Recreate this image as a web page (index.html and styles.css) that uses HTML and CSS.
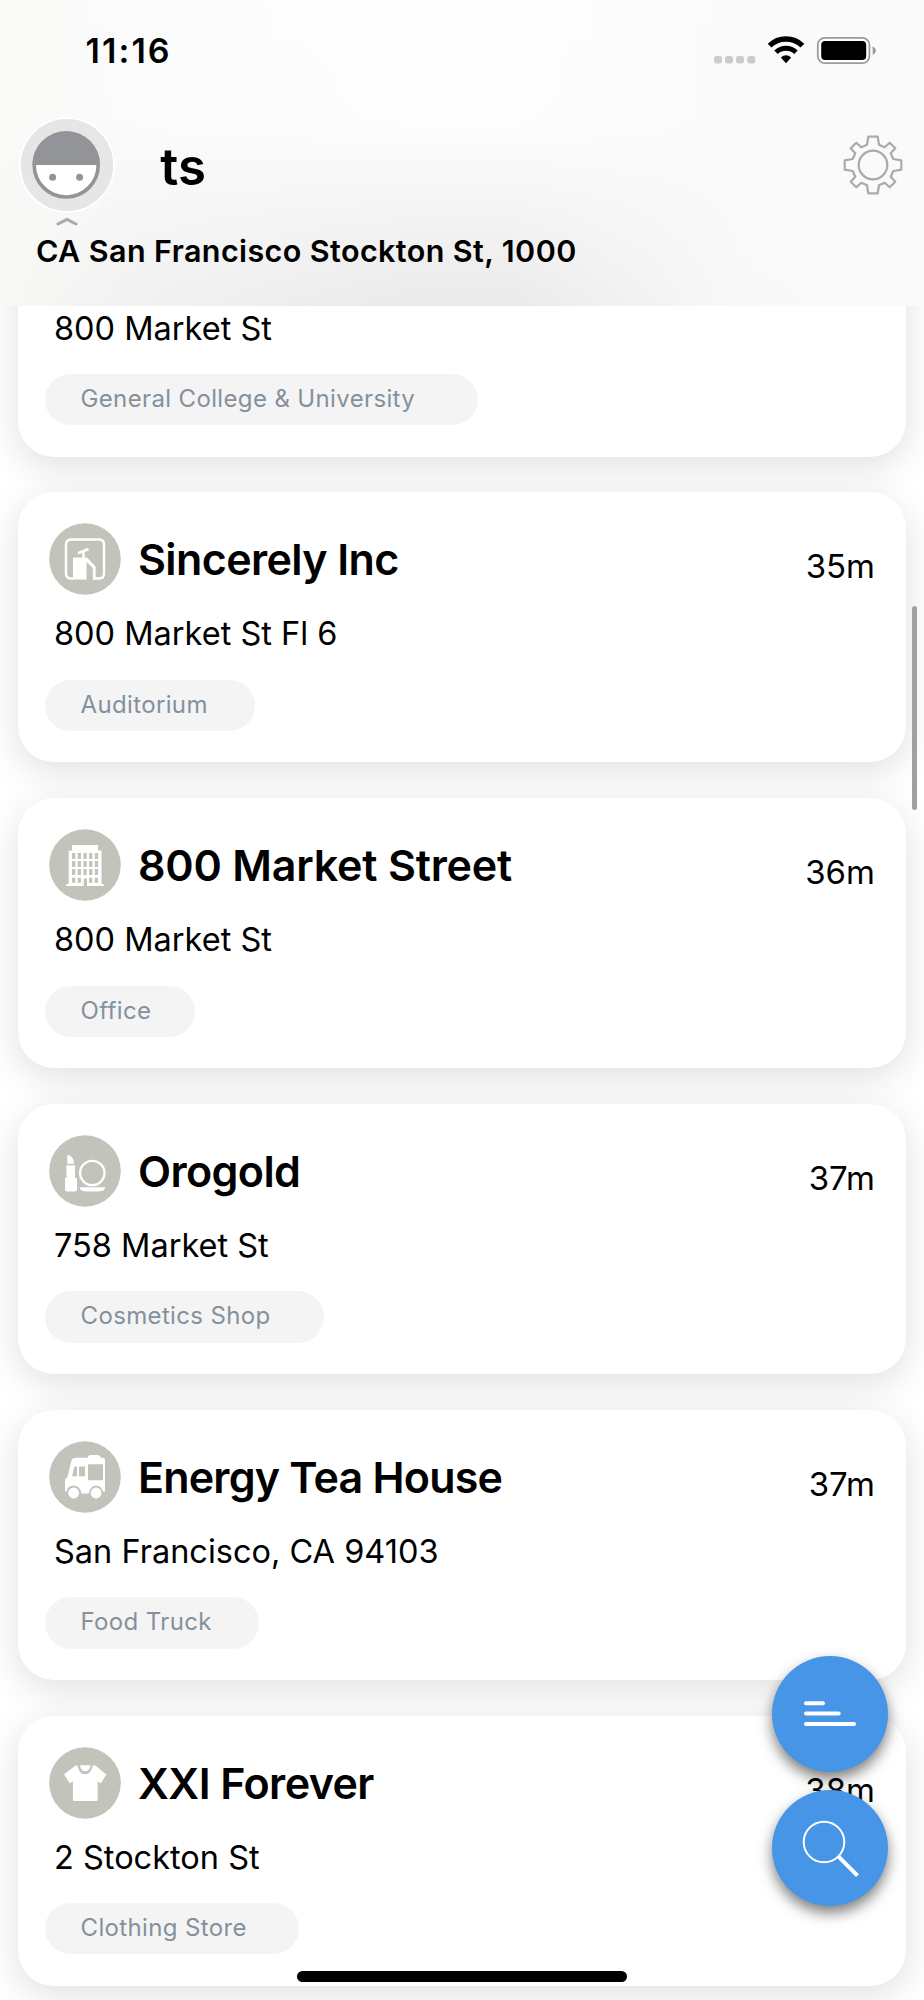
FILE: index.html
```html
<!DOCTYPE html>
<html lang="en">
<head>
<meta charset="utf-8">
<title>Nearby places</title>
<link rel="stylesheet" href="styles.css">
</head>
<body>
<div class="screen">
  <header class="header">
    <div class="status">
      <span class="time">11:16</span>
      <svg class="status-icons" viewBox="0 0 164 30" width="164" height="30">
        <g fill="#cbcbcb"><rect x="0" y="20" width="8" height="7.5" rx="2.5"/><rect x="11" y="20" width="8" height="7.5" rx="2.5"/><rect x="22" y="20" width="8" height="7.5" rx="2.5"/><rect x="33.3" y="20" width="8" height="7.5" rx="2.5"/></g>
        <g fill="none" stroke="#000">
          <path d="M55.6 9.6A23.5 23.5 0 0 1 88.4 9.6" stroke-width="5.4"/>
          <path d="M62 16.3A14.5 14.5 0 0 1 82 16.3" stroke-width="5"/>
        </g>
        <path d="M66.8 21.6Q72 17 77.2 21.6L72 27.2Z" fill="#000"/>
        <rect x="103.8" y="1.8" width="51.6" height="25.4" rx="7.2" fill="#fff" stroke="#9b9b9b" stroke-width="1.8"/>
        <rect x="107.2" y="5" width="45" height="19" rx="4" fill="#000"/>
        <path d="M158.6 10.2Q162 12 162 14.5T158.6 19Z" fill="#9b9b9b"/>
      </svg>
    </div>
    <div class="profile">
      <svg class="avatar" viewBox="0 0 96 96" width="96" height="96">
        <circle cx="48" cy="48" r="47" fill="#e6e6e4" stroke="#fff" stroke-width="1.8"/>
        <circle cx="47.2" cy="48" r="32" fill="#fff" stroke="#939498" stroke-width="3.6"/>
        <path d="M13.4 48A33.8 33.8 0 0 1 81 48Z" fill="#939498"/>
        <circle cx="33.6" cy="60.2" r="3.5" fill="#939498"/><circle cx="60.6" cy="60.2" r="3.5" fill="#939498"/>
      </svg>
      <h1 class="user">ts</h1>
      <svg class="gear" viewBox="-30 -30 60 60" width="60" height="60" fill="none" stroke="#aaa" stroke-width="2.2" stroke-linejoin="round">
        <path d="M-4.7-28.3H4.7L6-20.3 11.7-17.7 16.7-22.3 22.3-16.7 17.7-11.7 20.3-6 28.3-4.7V4.7L20.3 6 17.7 11.7 22.3 16.7 16.7 22.3 11.7 17.7 6 20.3 4.7 28.3H-4.7L-6 20.3-11.7 17.7-16.7 22.3-22.3 16.7-17.7 11.7-20.3 6-28.3 4.7V-4.7L-20.3-6-17.7-11.7-22.3-16.7-16.7-22.3-11.7-17.7-6-20.3Z"/>
        <circle r="14.3"/>
      </svg>
    </div>
    <svg class="chevron" viewBox="0 0 22 9" width="22" height="9"><path d="M2 7 11 2.3 20 7" fill="none" stroke="#aaa" stroke-width="3" stroke-linecap="round" stroke-linejoin="round"/></svg>
    <p class="location">CA San Francisco Stockton St, 1000</p>
  </header>

  <main class="list">
    <article class="card">
      <div class="top"></div>
      <p class="address">800 Market St</p>
      <span class="tag tag-university">General College &amp; University</span>
    </article>
    <article class="card">
      <div class="top">
        <svg class="icon" viewBox="0 0 72 72" width="72" height="72">
          <circle cx="36" cy="36" r="35.8" fill="#c3c3bc"/>
          <path d="M24 55.5H22Q17 55.5 17 50.5V21.5Q17 16.5 22 16.5H50Q55 16.5 55 21.5V50.5Q55 55.5 50 55.5H45V44L37 36.5" fill="none" stroke="#fff" stroke-width="2.4"/>
          <path d="M24 34.5H38L46.5 43.5V55H44V45L37.5 38.5V56.5H24Z" fill="#fff"/>
          <path d="M29 30.3 39.5 26M34.5 28V35" fill="none" stroke="#fff" stroke-width="2.6"/>
        </svg>
        <h2 class="name">Sincerely Inc</h2><span class="distance">35m</span>
      </div>
      <p class="address">800 Market St Fl 6</p>
      <span class="tag tag-auditorium">Auditorium</span>
    </article>
    <article class="card">
      <div class="top">
        <svg class="icon" viewBox="0 0 72 72" width="72" height="72">
          <circle cx="36" cy="36" r="35.8" fill="#c3c3bc"/>
          <path d="M23 16H49V21.5H52.5V55H54.7V57H38V49.5H34.7V57H17.3V55H19.7V21.5H23Z" fill="#fff"/>
          <path d="M23 27H51M23 35H51M23 43H51" stroke="#c3c3bc" stroke-width="5.8" stroke-dasharray="3.3 2.4"/>
          <path d="M23 51.3H32M40 51.3H50" stroke="#c3c3bc" stroke-width="5" stroke-dasharray="3.3 2.4"/>
        </svg>
        <h2 class="name name-loose">800 Market Street</h2><span class="distance">36m</span>
      </div>
      <p class="address">800 Market St</p>
      <span class="tag tag-office">Office</span>
    </article>
    <article class="card">
      <div class="top">
        <svg class="icon" viewBox="0 0 72 72" width="72" height="72">
          <circle cx="36" cy="36" r="35.8" fill="#c3c3bc"/>
          <path d="M18.3 20Q24.8 20.8 25 28.8H18.3ZM17.4 30.3H26V43H28V54.5Q28 56.5 26 56.5H18Q16 56.5 16 54.5V43H17.4Z" fill="#fff"/>
          <circle cx="43.3" cy="38" r="12.2" fill="none" stroke="#fff" stroke-width="2.3"/>
          <path d="M30.5 52.2H56.2Q56 56.5 48 56.5H39Q30.5 56.5 30.5 52.2Z" fill="#fff"/>
        </svg>
        <h2 class="name">Orogold</h2><span class="distance">37m</span>
      </div>
      <p class="address">758 Market St</p>
      <span class="tag tag-cosmetics">Cosmetics Shop</span>
    </article>
    <article class="card">
      <div class="top">
        <svg class="icon" viewBox="0 0 72 72" width="72" height="72">
          <circle cx="36" cy="36" r="35.8" fill="#c3c3bc"/>
          <path d="M27 16.7H38.5Q39 14 41.5 14H49Q51.5 14 52 16.7H54Q56 17 56 19V50.5H54Q52.5 44.5 47 44.5T39.7 52.5H32.5Q31 44.5 24.5 44.5T17.5 51Q16 51 16 49V40Q16 37.5 18.5 36L22.5 19.5Q23.2 16.7 27 16.7Z" fill="#fff"/>
          <path d="M25.5 25.4H28V35.2H23ZM30 25.4H36V35.2H30ZM39 23.2H54V39.2H39Z" fill="#c3c3bc"/>
          <circle cx="24.6" cy="52" r="5.4" fill="#fff"/><circle cx="47.1" cy="52" r="5.4" fill="#fff"/>
        </svg>
        <h2 class="name name-tight">Energy Tea House</h2><span class="distance">37m</span>
      </div>
      <p class="address">San Francisco, CA 94103</p>
      <span class="tag tag-truck">Food Truck</span>
    </article>
    <article class="card">
      <div class="top">
        <svg class="icon" viewBox="0 0 72 72" width="72" height="72">
          <circle cx="36" cy="36" r="35.8" fill="#c3c3bc"/>
          <path d="M26.5 18.5H28.5Q30 27.2 36 27.2T43.8 18.5H46.5L57.3 27.5 52 36.2 48.7 34.2V52.5Q48.7 54 47.2 54H25.4Q23.9 54 23.9 52.5V34.2L20.7 36.2 15 27.5Z" fill="#fff"/>
          <path d="M31 18.2H41.5Q40.5 24.2 36.2 24.2T31 18.2Z" fill="#fff"/>
        </svg>
        <h2 class="name">XXI Forever</h2><span class="distance">38m</span>
      </div>
      <p class="address">2 Stockton St</p>
      <span class="tag tag-clothing">Clothing Store</span>
    </article>
  </main>

  <div class="scrollbar"></div>
  <div class="actions">
    <button class="fab" aria-label="Sort">
      <svg viewBox="0 0 116 116" width="116" height="116"><path d="M34 47.2H51M34 57.6H66.7M34 68H82" stroke="#fff" stroke-width="4" stroke-linecap="round"/></svg>
    </button>
    <button class="fab" aria-label="Search">
      <svg viewBox="0 0 116 116" width="116" height="116" fill="none" stroke="#fff"><circle cx="52" cy="52" r="20.3" stroke-width="2"/><path d="M66.3 66.3 85.5 85.7" stroke-width="4"/></svg>
    </button>
  </div>
  <div class="home-indicator"></div>
</div>
</body>
</html>
```
FILE: styles.css
```css
* { box-sizing: border-box; }
body { margin: 0; font-family: Inter, "Liberation Sans", sans-serif; color: #000; background: #fff; }
h1, h2, p { margin: 0; }

.screen { position: relative; width: 924px; height: 2000px; overflow: hidden; display: flex; flex-direction: column; background: #fff; }

.header {
  position: relative; z-index: 1; flex: none; height: 305.7px; display: flex; flex-direction: column;
  background:
    linear-gradient(90deg, rgba(249,249,247,.95) 0, rgba(248,249,248,.5) 14%, rgba(248,249,248,0) 45%),
    linear-gradient(270deg, rgba(250,250,250,1) 0, rgba(250,250,250,.9) 20%, rgba(250,250,250,0) 45%),
    linear-gradient(180deg, #fefefe 0, #fdfdfd 40%, #f5f5f5 66%, #eaeaea 100%);
}
.status { display: flex; justify-content: space-between; align-items: flex-start; height: 117px; padding: 30px 46px 0 85.5px; }
.time { font-size: 34px; line-height: 42px; font-weight: 600; letter-spacing: 2.1px; }
.status-icons { margin-top: 6px; }
.profile { display: flex; align-items: center; height: 96px; padding: 0 21.3px 0 19.3px; }
.avatar { flex: none; }
.user { flex: 1; padding: 3px 0 0 45px; font-size: 51px; line-height: 60px; font-weight: 600; }
.chevron { display: block; flex: none; margin: 4px 0 0 56px; }
.location { margin: 5px 0 0 36px; font-size: 30.5px; line-height: 40px; font-weight: 600; letter-spacing: .4px; white-space: nowrap; }

.list { display: flex; flex-direction: column; gap: 35.7px; margin-top: -119.1px; padding: 0 18px; }
.card {
  flex: none; height: 270.1px; padding: 31px 31px 0 27px; border-radius: 36px; background: #fff;
  box-shadow: 0 9px 37px rgba(0,0,0,.125);
  display: flex; flex-direction: column; align-items: flex-start;
}
.top { display: flex; align-self: stretch; height: 72px; padding-left: 4px; }
.icon { flex: none; }
.name { flex: 1; padding-left: 17px; font-size: 43px; line-height: 72px; font-weight: 600; letter-spacing: -.6px; white-space: nowrap; }
.name-loose { letter-spacing: -.2px; }
.name-tight { letter-spacing: -.8px; }
.distance { padding-top: 7px; font-size: 33px; line-height: 72px; }
.address { margin: 18px 0 0 9px; font-size: 32.5px; line-height: 42px; white-space: nowrap; }
.tag {
  margin-top: 24.5px; height: 51.4px; padding: 0 0 0 35.5px; border-radius: 26px; background: #f4f4f4;
  color: #84919c; font-size: 24px; line-height: 49px; letter-spacing: .36px; white-space: nowrap;
}
.tag-university { width: 433px; }
.tag-auditorium { width: 209.5px; }
.tag-office { width: 149.5px; }
.tag-cosmetics { width: 279px; }
.tag-truck { width: 214px; }
.tag-clothing { width: 254px; }

.scrollbar { position: absolute; left: 912px; top: 606px; width: 5px; height: 204px; border-radius: 3px; background: #a1a1a1; }
.actions { position: absolute; left: 772px; top: 1656px; display: flex; flex-direction: column; gap: 18px; }
.fab { width: 116px; height: 116px; padding: 0; border: 0; border-radius: 50%; background: #4795e6; box-shadow: 0 7px 14px rgba(0,0,0,.5); }
.fab svg { display: block; }
.home-indicator { position: absolute; left: 297px; top: 1971px; width: 330px; height: 11px; border-radius: 6px; background: #000; }
```
